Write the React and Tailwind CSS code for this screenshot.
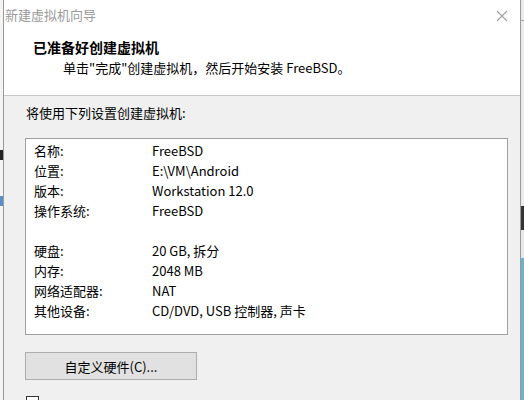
import React from 'react';

const rows = [
  ['名称:', 'FreeBSD'],
  ['位置:', 'E:\\VM\\Android'],
  ['版本:', 'Workstation 12.0'],
  ['操作系统:', 'FreeBSD'],
  ['', ''],
  ['硬盘:', '20 GB, 拆分'],
  ['内存:', '2048 MB'],
  ['网络适配器:', 'NAT'],
  ['其他设备:', 'CD/DVD, USB 控制器, 声卡'],
];

function App() {
  const font = { fontFamily: '"Noto Sans CJK SC", "Noto Sans", sans-serif' };

  return (
    <div className="w-[524px] h-[400px] overflow-hidden flex bg-white text-[13px] text-black" style={font}>
      {/* window behind, left edge */}
      <div className="w-[3px] shrink-0 flex flex-col bg-[#f4f4f4]">
        <div className="h-[150px] shrink-0" />
        <div className="h-[10px] shrink-0 bg-[#222]" />
        <div className="h-[36px] shrink-0" />
        <div className="h-[10px] shrink-0 bg-[#5b8fc9]" />
      </div>

      {/* dialog */}
      <div className="flex-1 min-w-0 flex flex-col border-x border-[#9a9a9a] bg-[#f0f0f0] overflow-hidden">
        <div className="h-[30px] shrink-0 bg-white flex items-center justify-between pl-[1px] pr-[12px]">
          <span className="text-[#9a9a9a] text-[13px] leading-[20px]">新建虚拟机向导</span>
          <svg width="12" height="12" viewBox="0 0 12 12" className="mt-[1px]">
            <path d="M1 1 L11 11 M11 1 L1 11" stroke="#a0a0a0" strokeWidth="1.1" fill="none" />
          </svg>
        </div>

        <div className="h-[66px] shrink-0 bg-white border-b border-[#c8c8c8] pt-[7px] pl-[29px]">
          <div className="text-[14px] font-bold leading-[20px]">已准备好创建虚拟机</div>
          <div className="pl-[30px] leading-[22px]">单击"完成"创建虚拟机，然后开始安装 FreeBSD。</div>
        </div>

        <div className="shrink-0 flex flex-col pt-[7px] pl-[21px] pr-[12px]">
          <div className="leading-[20px] pl-[1px]">将使用下列设置创建虚拟机:</div>

          <div className="mt-[15px] h-[197px] shrink-0 bg-white border border-[#a0a0a0] pt-[2px] pl-[8px]">
            {rows.map(([label, value], i) => (
              <div key={i} className="h-[20px] leading-[20px] flex">
                <span className="w-[118px]">{label}</span>
                <span>{value}</span>
              </div>
            ))}
          </div>

          <button className="mt-[17px] shrink-0 w-[172px] h-[28px] bg-[#e1e1e1] border border-[#adadad] text-[13px] leading-[20px] pt-[1px]">
            自定义硬件(C)...
          </button>

          {/* checkbox of the next row, cut off by the window edge */}
          <div className="mt-[16px] shrink-0 flex items-center pl-[1px]">
            <span className="w-[13px] h-[13px] border border-[#333] bg-white" />
          </div>
        </div>
      </div>

      {/* window behind, right edge */}
      <div className="w-[3px] shrink-0 flex flex-col bg-[#ececec]">
        <div className="h-[20px] shrink-0" />
        <div className="h-[1px] shrink-0 bg-[#a8a8a8]" />
        <div className="h-[185px] shrink-0" />
        <div className="h-[24px] shrink-0 bg-[#333]" />
        <div className="h-[28px] shrink-0 bg-[#e8e8e8]" />
        <div className="flex-1 bg-[#6ab3c9]" />
      </div>
    </div>
  );
}

export default App;
